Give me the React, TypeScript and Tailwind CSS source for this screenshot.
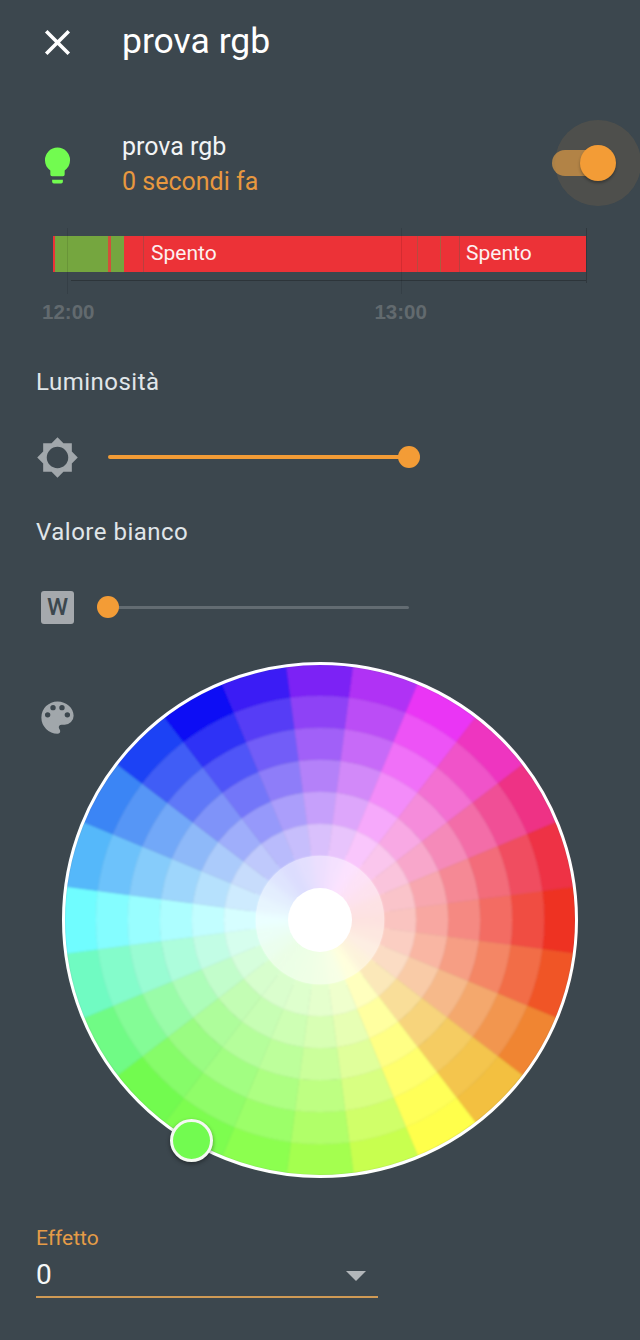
import React from "react";

// hue ring, clockwise from 3 o'clock, 15deg per sector
const HUES = [
  "#ee3124", "#f05528", "#f08532", "#f3c03f", "#ffff4c", "#c8ff50", "#a4ff50", "#8cff50",
  "#7dfd50", "#72fb50", "#70fb85", "#70fbc2", "#70fdff", "#55b8fa", "#3a85f5", "#1f42f5",
  "#0a10f5", "#3a1cf5", "#7b22f5", "#b030f5", "#ea36f5", "#ee36c0", "#ee3285", "#ee3145",
];

const mixWhite = (hex: string, t: number) => {
  const n = parseInt(hex.slice(1), 16);
  const ch = (v: number) => Math.round(v + (255 - v) * t);
  return `rgb(${ch((n >> 16) & 255)},${ch((n >> 8) & 255)},${ch(n & 255)})`;
};

const sector = (r0: number, r1: number, a0: number, a1: number) => {
  const p = (r: number, a: number) => {
    const rad = (a * Math.PI) / 180;
    return `${(258 + r * Math.cos(rad)).toFixed(2)} ${(258 + r * Math.sin(rad)).toFixed(2)}`;
  };
  return `M${p(r0, a0)} A${r0} ${r0} 0 0 1 ${p(r0, a1)} L${p(r1, a1)} A${r1} ${r1} 0 0 0 ${p(r1, a0)} Z`;
};

const tint = (c: string, h: number, i: number) => {
  // the yellow wedge keeps its colour further in
  const t = h === 4 || h === 3 ? Math.pow(i / 7, 1.35) : i / 7;
  return mixWhite(c, t);
};

function ColorWheel() {
  const outer = [0, 1, 2, 3, 4, 5];
  return (
    <svg width={516} height={516} viewBox="0 0 516 516" className="block">
      <defs>
        <filter id="soft" x="-5%" y="-5%" width="110%" height="110%">
          <feGaussianBlur stdDeviation={0.9} />
        </filter>
        <filter id="softer" x="-30%" y="-30%" width="160%" height="160%">
          <feGaussianBlur stdDeviation={3.5} />
        </filter>
        <clipPath id="inner">
          <circle cx={258} cy={258} r={64} />
        </clipPath>
      </defs>
      <circle cx={258} cy={258} r={70} fill="#ffffff" />
      <g filter="url(#soft)">
        {outer.map((i) =>
          HUES.map((c, h) => {
            const fill = tint(c, h, i);
            return (
              <path
                key={`${i}-${h}`}
                d={sector(224 - i * 32, 256 - i * 32, h * 15 - 7.5, h * 15 + 7.5)}
                fill={fill}
                stroke={fill}
                strokeWidth={0.6}
              />
            );
          })
        )}
      </g>
      {/* innermost ring melts together, so it is blurred on its own */}
      <g clipPath="url(#inner)">
        <g filter="url(#softer)">
          {HUES.map((c, h) => {
            const fill = tint(c, h, 6);
            return (
              <path
                key={h}
                d={sector(16, 84, h * 15 - 7.5, h * 15 + 7.5)}
                fill={fill}
                stroke={fill}
                strokeWidth={0.6}
              />
            );
          })}
        </g>
      </g>
      <circle cx={258} cy={258} r={32} fill="#ffffff" />
      <circle cx={258} cy={258} r={256.5} fill="none" stroke="#ffffff" strokeWidth={3} />
    </svg>
  );
}

function Icon({ d, className }: { d: string; className: string }) {
  return (
    <svg viewBox="0 0 24 24" className={className} fill="currentColor">
      <path d={d} />
    </svg>
  );
}

export default function App() {
  return (
    <div className="w-[640px] h-[1340px] overflow-hidden bg-[#3c474e] text-white font-['Roboto',sans-serif]">
      {/* header */}
      <div className="flex items-center h-[84px] pl-[36px]">
        <Icon
          className="w-[43px] h-[43px] text-white"
          d="M19,6.41L17.59,5L12,10.59L6.41,5L5,6.41L10.59,12L5,17.59L6.41,19L12,13.41L17.59,19L19,17.59L13.41,12L19,6.41Z"
        />
        <div className="ml-[43px] pb-[2px] text-[35.5px] leading-[40px]">prova rgb</div>
      </div>

      {/* state row */}
      <div className="flex items-center h-[86px] mt-[36px] pl-[36px]">
        <Icon
          className="w-[43px] h-[43px] mt-[4px] text-[#72fb50]"
          d="M12,2A7,7 0 0,0 5,9C5,11.38 6.19,13.47 8,14.74V17A1,1 0 0,0 9,18H15A1,1 0 0,0 16,17V14.74C17.81,13.47 19,11.38 19,9A7,7 0 0,0 12,2M9,21A1,1 0 0,0 10,22H14A1,1 0 0,0 15,21V20H9V21Z"
        />
        <div className="ml-[43px] pt-[1px] flex flex-col">
          <div className="text-[25px] leading-[35px] text-[#f2f4f5]">prova rgb</div>
          <div className="text-[25px] leading-[35px] text-[#e8983f]">0 secondi fa</div>
        </div>
        <div className="relative ml-auto mr-[38px] w-[50px] h-[26px] rounded-full bg-[#ab8148]">
          <div className="absolute left-[3px] top-[-30px] w-[86px] h-[86px] rounded-full bg-[#f39c36]/10" />
          <div className="absolute left-[28px] top-[-5px] w-[36px] h-[36px] rounded-full bg-[#f39c36] shadow-[0_2px_3px_rgba(0,0,0,0.3)]" />
        </div>
      </div>

      {/* history chart */}
      <div className="relative mt-[30px]">
        <div className="flex h-[36px] ml-[53px] w-[533px] bg-[#ec3237] text-[21px] text-[#fdf0f0]">
          <div className="w-[2px]" />
          <div className="w-[53px] bg-[#75a63f]" />
          <div className="w-[3px] bg-[#d2503a]" />
          <div className="w-[13px] bg-[#75a63f]" />
          <div className="w-[19px]" />
          <div className="w-px bg-[#b8403f]" />
          <div className="w-[273px] pl-[7px] leading-[34px]">Spento</div>
          <div className="w-px bg-[#b84a3f]" />
          <div className="w-[22px]" />
          <div className="w-px bg-[#a8603f]" />
          <div className="w-[18px]" />
          <div className="w-px bg-[#b8403f]" />
          <div className="flex-1 pl-[6px] leading-[34px]">Spento</div>
        </div>
        <div className="ml-[71px] w-[515px] mt-[8px] border-t border-[#000000]/25" />
        <div className="flex mt-[18px] ml-[42px] gap-[280px] text-[20.5px] leading-[26px] font-bold text-[#626a6e] font-['Liberation_Sans',sans-serif]">
          <span>12:00</span>
          <span>13:00</span>
        </div>
        {/* grid lines over the bar */}
        <div className="absolute left-[67px] top-[-8px] w-px h-[66px] bg-[#000000]/10" />
        <div className="absolute left-[401px] top-[-8px] w-px h-[66px] bg-[#000000]/10" />
        <div className="absolute left-[586px] top-[-8px] w-px h-[55px] bg-[#000000]/20" />
      </div>

      {/* brightness */}
      <div className="flex items-center h-[40px] mt-[37px] pl-[36px] text-[24px] text-[#e0e6e9] tracking-[0.5px]">Luminosità</div>
      <div className="flex items-center h-[50px] mt-[30px] pl-[36px]">
        <Icon
          className="w-[43px] h-[43px] text-[#a1a7ab]"
          d="M20,15.31L23.31,12L20,8.69V4H15.31L12,0.69L8.69,4H4V8.69L0.69,12L4,15.31V20H8.69L12,23.31L15.31,20H20V15.31M12,18A6,6 0 0,1 6,12A6,6 0 0,1 12,6A6,6 0 0,1 18,12A6,6 0 0,1 12,18Z"
        />
        <div className="relative ml-[29px] w-[301px] h-[4px] rounded-full bg-[#f39c36]">
          <div className="absolute right-[-11px] top-[-9px] w-[22px] h-[22px] rounded-full bg-[#f39c36]" />
        </div>
      </div>

      {/* white value */}
      <div className="flex items-center h-[40px] mt-[30px] pl-[36px] text-[24px] text-[#e0e6e9] tracking-[0.5px]">Valore bianco</div>
      <div className="flex items-center h-[50px] mt-[30px] pl-[36px]">
        <div className="flex items-center justify-center w-[33px] h-[33px] ml-[5px] rounded-[3px] bg-[#a5a9ad] text-[24px] font-medium text-[#3c474e]">W</div>
        <div className="relative ml-[34px] w-[301px] h-[3px] rounded-full bg-[#636c72]">
          <div className="absolute left-[-11px] top-[-10px] w-[22px] h-[22px] rounded-full bg-[#f39c36]" />
        </div>
      </div>

      {/* colour wheel */}
      <div className="relative mt-[30px] ml-[62px] w-[516px] h-[516px]">
        <ColorWheel />
        <Icon
          className="absolute left-[-26px] top-[34px] w-[43px] h-[43px] text-[#a1a7ab]"
          d="M17.5,12A1.5,1.5 0 0,1 16,10.5A1.5,1.5 0 0,1 17.5,9A1.5,1.5 0 0,1 19,10.5A1.5,1.5 0 0,1 17.5,12M14.5,8A1.5,1.5 0 0,1 13,6.5A1.5,1.5 0 0,1 14.5,5A1.5,1.5 0 0,1 16,6.5A1.5,1.5 0 0,1 14.5,8M9.5,8A1.5,1.5 0 0,1 8,6.5A1.5,1.5 0 0,1 9.5,5A1.5,1.5 0 0,1 11,6.5A1.5,1.5 0 0,1 9.5,8M6.5,12A1.5,1.5 0 0,1 5,10.5A1.5,1.5 0 0,1 6.5,9A1.5,1.5 0 0,1 8,10.5A1.5,1.5 0 0,1 6.5,12M12,3A9,9 0 0,0 3,12A9,9 0 0,0 12,21A1.5,1.5 0 0,0 13.5,19.5C13.5,19.11 13.35,18.76 13.11,18.5C12.88,18.23 12.73,17.88 12.73,17.5A1.5,1.5 0 0,1 14.23,16H16A5,5 0 0,0 21,11C21,6.58 16.97,3 12,3Z"
        />
        <div className="absolute left-[108px] top-[457px] w-[43px] h-[43px] rounded-full bg-[#72fb50] border-[3px] border-[#f4f8f2] shadow-[0_2px_4px_rgba(0,0,0,0.4)]" />
      </div>

      {/* effect select */}
      <div className="ml-[36px] w-[342px] mt-[48px] border-b-2 border-[#cf9a55]">
        <div className="text-[21px] leading-[24px] text-[#e59c47]">Effetto</div>
        <div className="flex items-center justify-between h-[46px] pt-[4px] pr-[12px] text-[28px] text-[#f5f7f8]">
          <span>0</span>
          <span className="w-0 h-0 mt-[2px] border-x-[10px] border-t-[10px] border-x-transparent border-t-[#b3b7ba]" />
        </div>
      </div>
    </div>
  );
}
